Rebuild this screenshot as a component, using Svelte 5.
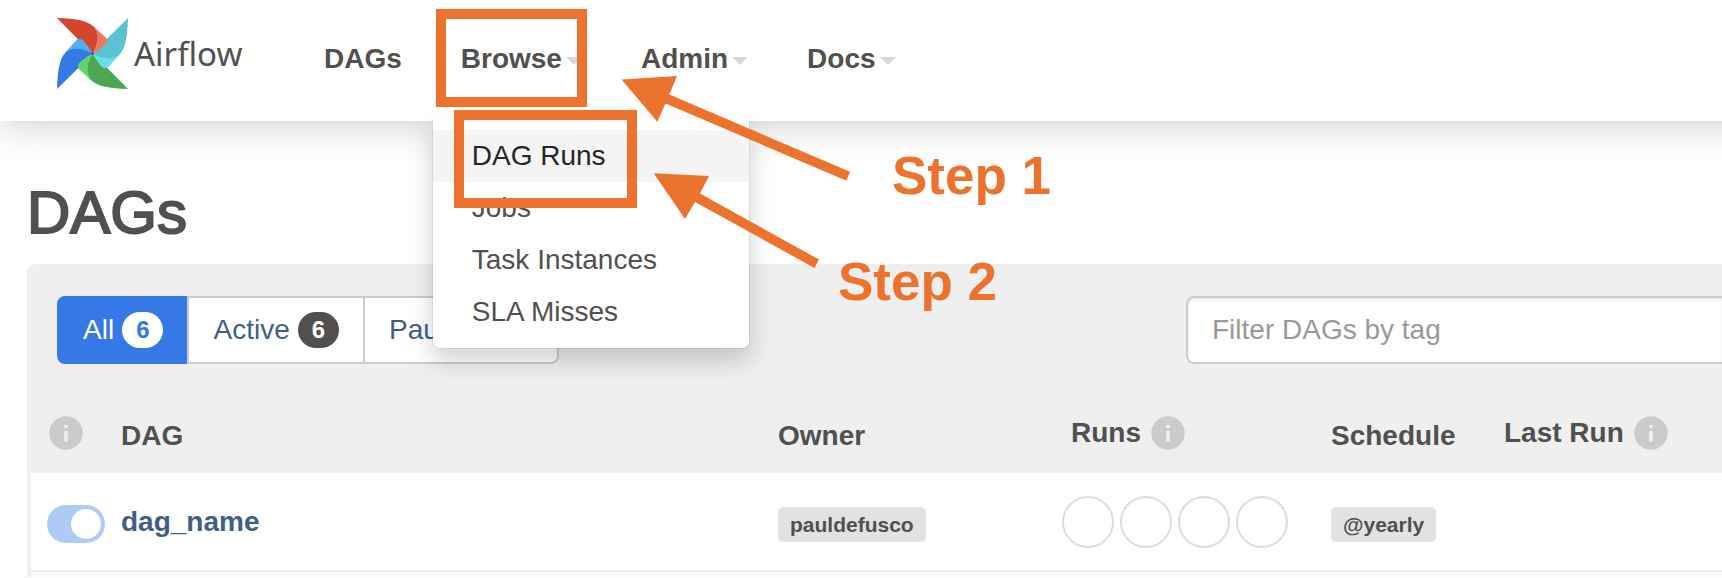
<script>
  const blades = [
    { angle: 0, dark: '#d2462f', light: '#ee7a5e' },
    { angle: 90, dark: '#5ac3cf', light: '#66deea' },
    { angle: 180, dark: '#4da752', light: '#5fd56a' },
    { angle: 270, dark: '#3579e6', light: '#50aef6' }
  ];

  const nav = [
    { label: 'DAGs' },
    { label: 'Browse', caret: true, items: ['DAG Runs', 'Jobs', 'Task Instances', 'SLA Misses'] },
    { label: 'Admin', caret: true },
    { label: 'Docs', caret: true }
  ];

  const filters = [
    { label: 'All', count: 6, active: true },
    { label: 'Active', count: 6 },
    { label: 'Paused', count: 0 }
  ];

  let enabled = $state(true);
</script>

{#snippet info()}
  <svg class="info" viewBox="0 0 34 34" aria-hidden="true">
    <circle cx="17" cy="17" r="16.7" fill="#cbcbcb" />
    <path d="M15.2 9h3.6v3.2h-3.6zM15.2 15h3.6v10.8h-3.6z" fill="#efefef" />
  </svg>
{/snippet}

<header class="navbar">
  <a class="brand" href="#home">
    <svg class="pinwheel" viewBox="0 0 212 212" aria-hidden="true">
      {#each blades as b}
        <path
          transform="rotate({b.angle} 106 106)"
          fill={b.light}
          stroke={b.light}
          d="M110 26L149 62C151 70 150 78 137 87C126 95 116 102 106 106L100 60Z"
        />
      {/each}
      {#each blades as b}
        <path
          transform="rotate({b.angle} 106 106)"
          fill={b.dark}
          d="M0 0C58 2 92 8 110 26C126 48 122 78 106 106C101 97 94 87 86 76C77 62 70 62 62 63Z"
        />
      {/each}
      <circle cx="106" cy="106" r="4" fill="#454545" />
    </svg>
    <span>Airflow</span>
  </a>
  <nav>
    <ul class="menu">
      {#each nav as entry}
        <li>
          <a class="menu-link" href="#{entry.label}">
            {entry.label}{#if entry.caret}<span class="caret"></span>{/if}
          </a>
          {#if entry.items}
            <ul class="dropdown">
              {#each entry.items as item, i}
                <li><a class:hovered={i === 0} href="#{item}">{item}</a></li>
              {/each}
            </ul>
            <span class="mark mark-menu"></span>
            <span class="mark mark-item"></span>
          {/if}
        </li>
      {/each}
    </ul>
  </nav>
</header>

<main>
  <h1>DAGs</h1>
  <section class="panel">
    <div class="toolbar">
      <div class="group">
        {#each filters as f}
          <button class:active={f.active}>{f.label} <span class="badge">{f.count}</span></button>
        {/each}
      </div>
      <input class="tags" type="text" placeholder="Filter DAGs by tag" aria-label="Filter DAGs by tag" />
    </div>
    <table>
      <colgroup>
        <col class="c-toggle" /><col /><col class="c-owner" /><col class="c-runs" /><col
          class="c-schedule"
        /><col class="c-last" />
      </colgroup>
      <thead>
        <tr>
          <th class="icon-only">{@render info()}</th>
          <th>DAG</th>
          <th>Owner</th>
          <th><span class="with-info runs-head">Runs {@render info()}</span></th>
          <th>Schedule</th>
          <th><span class="with-info">Last Run {@render info()}</span></th>
        </tr>
      </thead>
      <tbody>
        <tr>
          <td class="toggle-cell">
            <input class="toggle" type="checkbox" bind:checked={enabled} aria-label="Toggle dag_name" />
          </td>
          <td><a class="dag" href="#dag_name">dag_name</a></td>
          <td><a class="tag" href="#owner">pauldefusco</a></td>
          <td>
            <div class="runs">
              {#each [1, 2, 3, 4] as n (n)}<span class="run"></span>{/each}
            </div>
          </td>
          <td><a class="tag" href="#schedule">@yearly</a></td>
          <td></td>
        </tr>
        <tr class="next"><td colspan="6"></td></tr>
      </tbody>
    </table>
  </section>
</main>

<svg class="arrows" width="860" height="280" viewBox="0 0 860 280" aria-hidden="true">
  <path
    fill="#ec732e"
    d="M621.5 79.5L677 76L669.3 94.5L850 171.8L846.5 180.8L665.5 103.5L657.3 121.7Z"
  />
  <path
    fill="#ec732e"
    d="M653.7 173.3L709 176L700 193.5L819 259.5L814.5 268L695 202L685 219Z"
  />
</svg>
<span class="step step-one">Step 1</span>
<span class="step step-two">Step 2</span>

<style>
  :global(body) {
    background: #fff;
    color: #51504f;
    font-family: 'Liberation Sans', Arial, sans-serif;
    font-size: 28px;
    line-height: 40px;
    overflow: hidden;
  }

  :global(#app) {
    position: relative;
  }

  a {
    color: inherit;
    text-decoration: none;
  }

  ul {
    list-style: none;
    margin: 0;
    padding: 0;
  }

  .navbar {
    position: relative;
    z-index: 1;
    display: flex;
    height: 121px;
    margin-right: -60px;
    padding-left: 57px;
    background: #fff;
    box-shadow: 0 4px 36px rgba(81, 80, 79, 0.28);
  }

  .brand {
    display: flex;
    align-items: center;
    gap: 6px;
    width: 239px;
    height: 107px;
    font-family: 'Noto Sans', sans-serif;
    font-size: 33px;
  }

  .pinwheel {
    width: 71px;
    height: 71px;
  }

  .menu {
    display: flex;
  }

  .menu > li {
    position: relative;
  }

  .menu-link {
    display: flex;
    align-items: center;
    padding: 39px 31px 0 28px;
    font-weight: 700;
  }

  .caret {
    margin: 4px 0 0 4px;
    border: 8px solid transparent;
    border-top-color: #ddd1e0;
    border-bottom: 0;
  }

  .dropdown {
    position: absolute;
    top: 119px;
    left: -1px;
    box-sizing: border-box;
    width: 318px;
    padding: 11px 0 10px;
    border: 1px solid rgba(0, 0, 0, 0.06);
    border-top: 0;
    border-radius: 0 0 8px 8px;
    background: #fff;
    background-clip: padding-box;
    box-shadow: 0 12px 24px rgba(0, 0, 0, 0.18);
  }

  .dropdown a {
    display: block;
    padding: 6px 39px;
  }

  .dropdown a.hovered {
    background: #f4f4f4;
    color: #262626;
  }

  .mark {
    position: absolute;
    box-sizing: border-box;
    height: 98px;
    border: 10px solid #ec732e;
  }

  .mark-menu {
    top: 9px;
    left: 3px;
    width: 151px;
  }

  .mark-item {
    top: 110px;
    left: 21px;
    width: 183px;
  }

  main {
    padding: 62px 0 0 27px;
  }

  h1 {
    margin: 0;
    padding-bottom: 21px;
    font-size: 60px;
    font-weight: 400;
    line-height: 60px;
    -webkit-text-stroke: 2px #51504f;
  }

  .panel {
    padding: 32px 0 0 4px;
    border-radius: 8px 0 0 0;
    background: #efefef;
  }

  .toolbar {
    display: flex;
    justify-content: space-between;
    padding-left: 26px;
  }

  .group {
    display: flex;
  }

  .group button {
    display: flex;
    align-items: center;
    gap: 8px;
    height: 68px;
    margin-left: -2px;
    padding: 0 24px;
    border: 2px solid #ccc;
    background: #fff;
    color: #3f5f87;
    font: inherit;
  }

  .group button:first-child {
    margin-left: 0;
    border-color: #3579e6;
    border-radius: 8px 0 0 8px;
    background: #3579e6;
    color: #fff;
  }

  .group button:last-child {
    border-radius: 0 8px 8px 0;
  }

  .badge {
    padding: 0 14px;
    border-radius: 18px;
    background: #51504f;
    color: #fff;
    font-size: 24px;
    font-weight: 700;
    line-height: 36px;
  }

  .active .badge {
    background: #fff;
    color: #3579e6;
  }

  .tags {
    box-sizing: border-box;
    width: 536px;
    height: 68px;
    padding: 0 24px;
    border: 2px solid #ccc;
    border-right: 0;
    border-radius: 8px 0 0 8px;
    background: #fff;
    box-shadow: inset 0 2px 2px rgba(0, 0, 0, 0.075);
    color: inherit;
    font: inherit;
  }

  .tags::placeholder {
    color: #999;
  }

  table {
    width: 100%;
    border-collapse: collapse;
    table-layout: fixed;
  }

  .c-toggle {
    width: 80px;
  }

  .c-owner {
    width: 284px;
  }

  .c-runs {
    width: 269px;
  }

  .c-schedule {
    width: 173px;
  }

  .c-last {
    width: 228px;
  }

  th,
  td {
    padding: 0 10px;
    text-align: left;
    vertical-align: middle;
  }

  th {
    height: 67px;
    padding-top: 42px;
    font-weight: 700;
    line-height: 60px;
    vertical-align: top;
  }

  th.icon-only {
    padding-left: 18px;
  }

  .info {
    width: 34px;
    height: 34px;
  }

  .icon-only .info {
    display: block;
    margin-top: 10px;
  }

  .with-info {
    display: flex;
    align-items: center;
    gap: 10px;
    height: 54px;
    line-height: 54px;
  }

  .runs-head {
    padding-left: 9px;
  }

  tbody tr {
    height: 98px;
    background: #fff;
  }

  tbody .next {
    height: 6px;
    border-top: 2px solid #eee;
    background: #f9f9f9;
  }

  .toggle-cell {
    padding-left: 16px;
  }

  .toggle {
    display: block;
    appearance: none;
    box-sizing: border-box;
    width: 58px;
    height: 38px;
    margin: 4px 0 0;
    padding: 4px;
    border-radius: 19px;
    background: #ccc;
  }

  .toggle::before {
    content: '';
    display: block;
    width: 30px;
    height: 30px;
    border-radius: 50%;
    background: #fff;
  }

  .toggle:checked {
    background: #aecaf6;
  }

  .toggle:checked::before {
    margin-left: auto;
  }

  .dag {
    color: #3f5f87;
    font-weight: 700;
  }

  .tag {
    display: block;
    width: fit-content;
    margin-top: 6px;
    padding: 0 12px;
    border-radius: 5px;
    background: #e2e2e2;
    font-size: 21px;
    font-weight: 700;
    line-height: 35px;
  }

  .runs {
    display: flex;
    gap: 6px;
  }

  .run {
    box-sizing: border-box;
    width: 52px;
    height: 52px;
    border: 2px solid #ddd;
    border-radius: 50%;
  }

  .arrows {
    position: absolute;
    z-index: 2;
    top: 0;
    left: 0;
    pointer-events: none;
  }

  .step {
    position: absolute;
    z-index: 2;
    color: #ec732e;
    font-size: 53px;
    font-weight: 700;
    line-height: 60px;
  }

  .step-one {
    top: 146px;
    left: 892px;
  }

  .step-two {
    top: 252px;
    left: 838px;
  }
</style>
